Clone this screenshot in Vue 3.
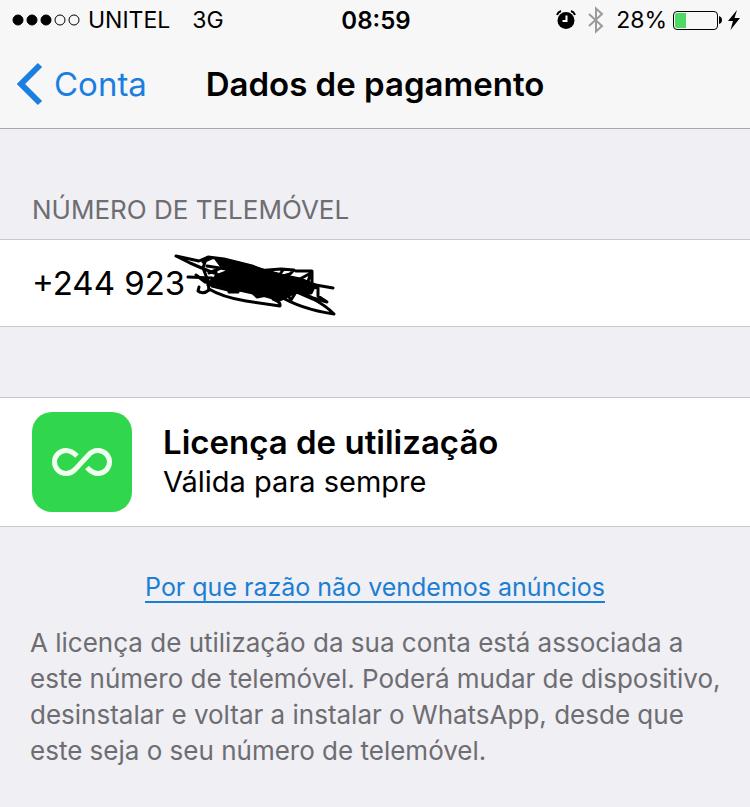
<script setup>
	import {ref} from 'vue'

	const signal = 3;
	const battery = ref(28);
	const phone = '+244 923';
</script>

<template>
	<div class="page">
		<header>
			<div class="status">
				<div class="side">
					<svg class="dots" width="68" height="12" viewBox="0 0 68 12" aria-hidden="true">
						<circle v-for="i in 5" :key="i" :cx="i * 14 - 8" cy="6" r="5" :class="{full: i <= signal}" />
					</svg>
					<span class="carrier">UNITEL</span>
					<span>3G</span>
				</div>
				<time>08:59</time>
				<div class="side right">
					<svg class="alarm" width="20" height="20" viewBox="0 0 20 20" aria-hidden="true">
						<circle cx="10" cy="10.5" r="8.5" />
						<path class="bell" d="M1 5Q2 2 5 1M15 1Q18 2 19 5" />
						<path class="hand" d="M10.5 5.5V11H6.5" />
					</svg>
					<svg class="bluetooth" width="16" height="28" viewBox="0 0 16 28" aria-hidden="true">
						<path d="M1 8L14 20L8 25.500V2.500L14 8L1 20" />
					</svg>
					<span class="percent">{{ battery }}%</span>
					<div class="battery"><div class="level" :style="{width: battery + '%'}"></div></div>
					<svg class="cap" width="3" height="8" viewBox="0 0 3 8" aria-hidden="true"><path d="M0 0Q3 1 3 4T0 8Z" /></svg>
					<svg width="12" height="20" viewBox="0 0 12 20" aria-hidden="true"><path d="M9 0L0 11H5L2.500 20L12 8H6.500Z" /></svg>
				</div>
			</div>
			<nav>
				<a class="back" href="#conta">
					<svg width="27" height="44" viewBox="0 0 27 44" aria-hidden="true"><path d="M24 3L5 22L24 41" /></svg>
					Conta
				</a>
				<h1>Dados de pagamento</h1>
			</nav>
		</header>

		<main>
			<h2>NÚMERO DE TELEMÓVEL</h2>
			<div class="row number">
				<span>{{ phone }}</span>
				<div class="hidden">
					<svg width="168" height="68" viewBox="172 250 168 68" aria-hidden="true">
						<path class="mass" d="M216 260L238 264L262 271L280 276L300 280L315 286L311 294L296 293L280 301L266 297L244 292L226 288L210 283L218 276L234 274L222 268Z" />
						<path d="M176 257L199 262L208 258L224 260L252 267L282 278M176 257L190 264L204 270L214 274M203 263L212 259M206 260L203 269L208 282" />
						<path d="M188 278L212 279M196 276L205 283L220 286M199 288L198 292Q203 296 209 291L208 283L203 281" />
						<path d="M209 290Q222 298 246 302L280 307Q281 303 273 300L275 297L282 294" />
						<path d="M207 267L226 270L244 266M209 274L228 266M208 286L230 280M216 270V277L229 272M229 286V293H238M212 287L228 291L250 291L257 298L267 296L250 288" />
						<path d="M256 272L268 271L281 270L294 271L290 275L276 279L266 272L296 280M296 272H312V287M298 281L311 274L306 288M283 271L278 278" />
						<path d="M310 285L333 289M300 286L318 289V297L327 303L313 299L294 289M309 294L296 293L291 301L287 295" />
						<path d="M278 296Q300 310 334 315Q325 306 313 300L290 290" />
					</svg>
				</div>
			</div>

			<div class="row licence">
				<div class="badge">
					<svg width="60" height="30" viewBox="0 0 60 30" aria-hidden="true">
						<path d="M25 9C21 5 18 3.500 14 3.500A11.500 11.500 0 0 0 14 26.500C18 26.500 21 25 24 21.500L36 8.500C39 5 42 3.500 46 3.500A11.500 11.500 0 0 1 46 26.500C42 26.500 39 25 35 20.500" />
					</svg>
				</div>
				<div>
					<h3>Licença de utilização</h3>
					<p>Válida para sempre</p>
				</div>
			</div>

			<div class="link"><a href="#anuncios">Por que razão não vendemos anúncios</a></div>
			<p class="note">A licença de utilização da sua conta está associada a este número de telemóvel. Poderá mudar de dispositivo, desinstalar e voltar a instalar o WhatsApp, desde que este seja o seu número de telemóvel.</p>
		</main>
	</div>
</template>

<style>
	body{
		margin: 0;
		background: #efeff4;
	}
</style>

<style scoped>
	.page{
		font-family: Inter, "Liberation Sans", sans-serif;
		min-height: 100vh;
		background: #efeff4;
		color: #000;
	}

	h1, h2, h3, p{
		margin: 0;
	}

	svg{
		display: block;
		flex-shrink: 0;
	}

	header{
		background: #f7f7f7;
		border-bottom: 1px solid #a7a7ac;
	}

	.status{
		display: grid;
		grid-template-columns: 1fr auto 1fr;
		align-items: center;
		height: 40px;
		padding: 0 10px 0 12px;
		font-size: 23px;
	}
	.status time{
		font-size: 24px;
		font-weight: 600;
	}

	.side{
		display: flex;
		align-items: center;
	}
	.right{
		justify-content: flex-end;
	}

	.dots{
		margin-right: 8px;
	}
	.dots circle{
		fill: none;
		stroke: #000;
		stroke-width: 1;
	}
	.dots .full{
		fill: #000;
	}
	.carrier{
		margin-right: 22px;
	}

	.alarm{
		margin-right: 12px;
	}
	.alarm .bell{
		fill: none;
		stroke: #000;
		stroke-width: 2;
	}
	.alarm .hand{
		fill: none;
		stroke: #fff;
		stroke-width: 2;
	}
	.bluetooth{
		margin-right: 12px;
	}
	.bluetooth path{
		fill: none;
		stroke: #9b9b9b;
		stroke-width: 2;
	}
	.percent{
		margin-right: 6px;
	}
	.battery{
		box-sizing: border-box;
		width: 45px;
		height: 19px;
		padding: 1px;
		border: 1px solid #000;
		border-radius: 4px;
	}
	.level{
		height: 100%;
		border-radius: 2px 0 0 2px;
		background: #4cd964;
	}
	.cap{
		margin: 0 6px 0 1px;
	}

	nav{
		display: grid;
		grid-template-columns: 1fr auto 1fr;
		align-items: center;
		height: 88px;
		padding: 0 16px;
	}
	.back{
		display: flex;
		align-items: center;
		gap: 11px;
		color: #1a7fe0;
		font-size: 33px;
		text-decoration: none;
	}
	.back path{
		fill: none;
		stroke: #1a7fe0;
		stroke-width: 6;
	}
	h1{
		font-size: 33px;
		font-weight: 600;
	}

	h2{
		padding: 64px 32px 12px;
		color: #6d6d72;
		font-size: 26px;
		font-weight: 400;
		line-height: 34px;
	}

	.row{
		display: flex;
		align-items: center;
		padding: 0 32px;
		background: #fff;
		border-top: 1px solid #c8c7cc;
		border-bottom: 1px solid #c8c7cc;
	}
	.number{
		height: 86px;
		font-size: 33px;
	}
	/* the scribble starts over the end of the visible digits */
	.hidden{
		position: relative;
		align-self: stretch;
	}
	.hidden svg{
		position: absolute;
		top: 9px;
		left: -13px;
	}
	.hidden path{
		fill: none;
		stroke: #000;
		stroke-width: 3;
		stroke-linecap: round;
		stroke-linejoin: round;
	}
	.hidden .mass{
		fill: #000;
	}

	.licence{
		gap: 31px;
		height: 128px;
		margin-top: 70px;
	}
	.badge{
		display: flex;
		align-items: center;
		justify-content: center;
		width: 100px;
		height: 100px;
		border-radius: 20px;
		background: #30d64c;
	}
	.badge path{
		fill: none;
		stroke: #f0fff0;
		stroke-width: 5;
	}
	h3{
		font-size: 33px;
		font-weight: 600;
		line-height: 40px;
	}
	.licence p{
		font-size: 29px;
		line-height: 40px;
	}

	.link{
		margin-top: 42px;
		text-align: center;
		font-size: 25px;
		line-height: 36px;
	}
	.link a{
		color: #1a7fd4;
		text-underline-offset: 5px;
		text-decoration-thickness: 2px;
	}
	.note{
		padding: 20px 20px 20px 30px;
		color: #6d6d72;
		font-size: 26px;
		line-height: 36px;
	}
</style>
